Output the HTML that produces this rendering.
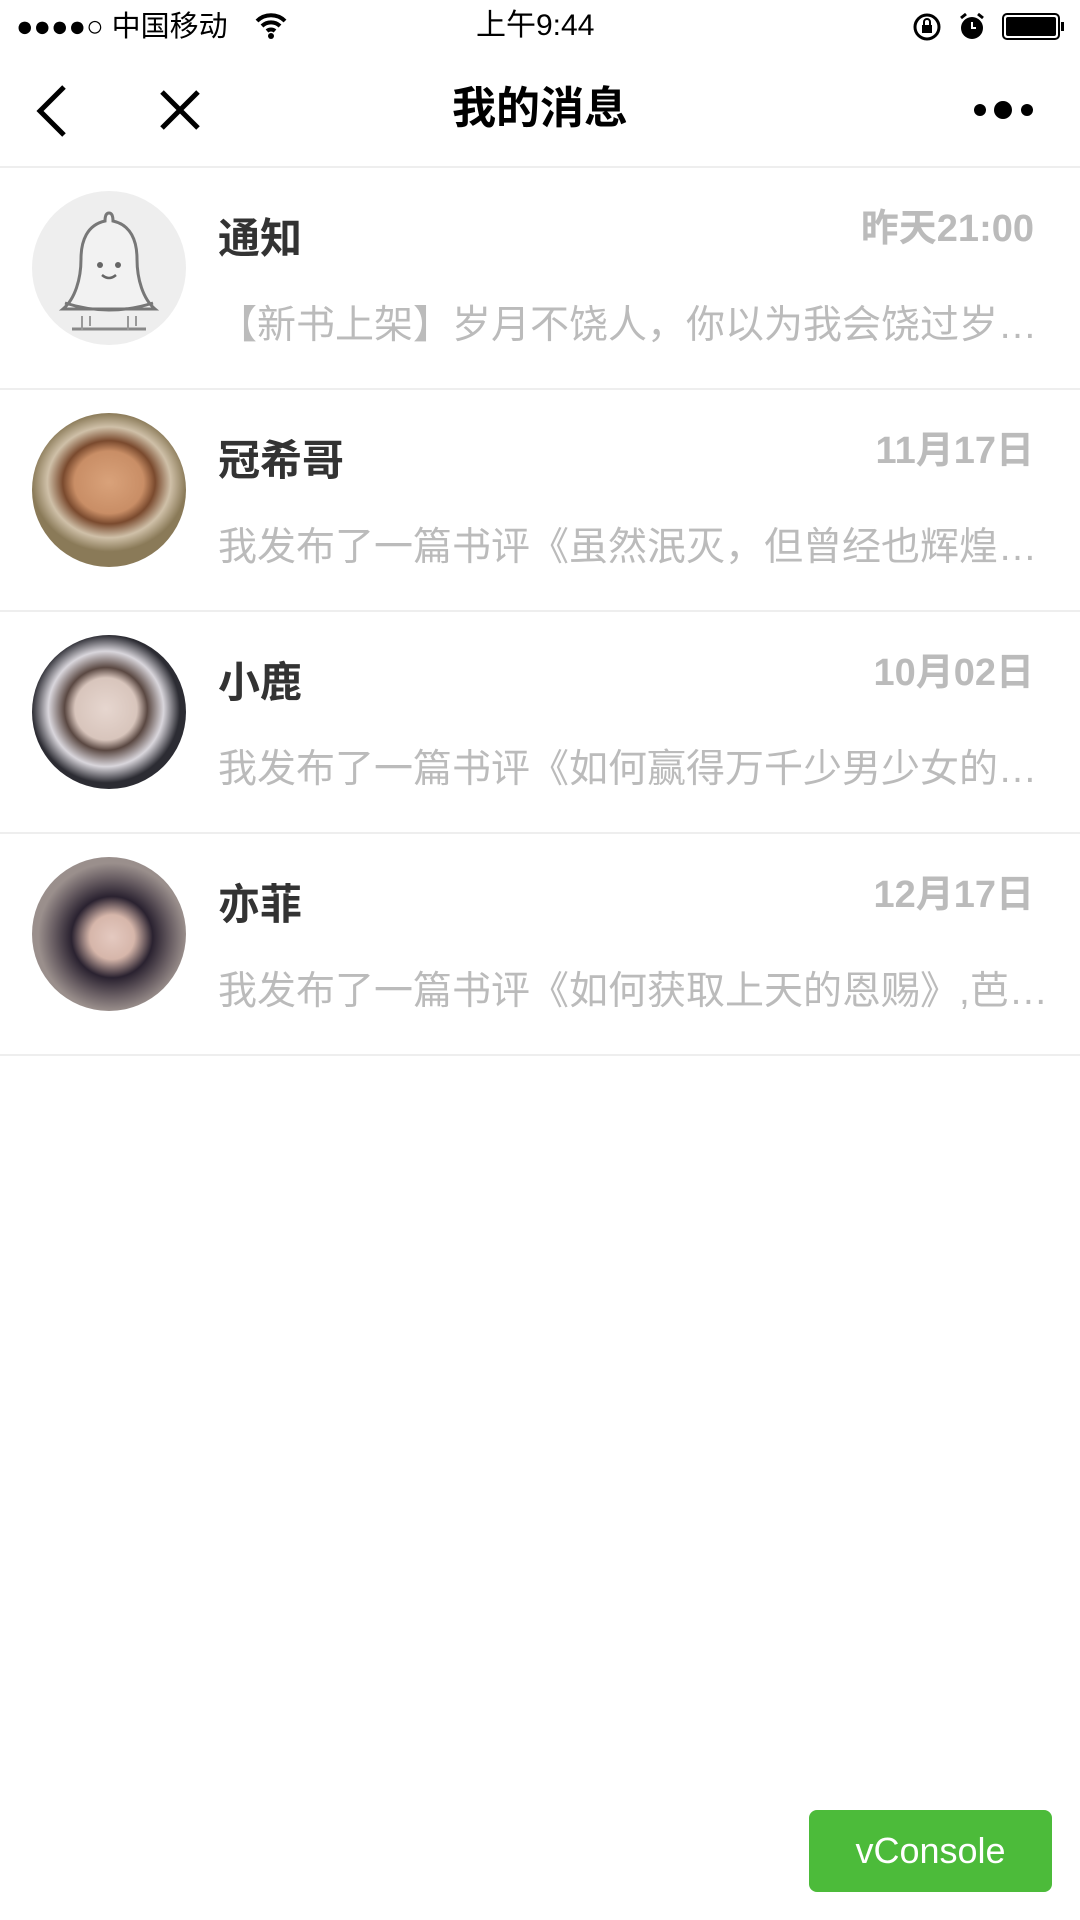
<!DOCTYPE html>
<html><head><meta charset="utf-8"><style>
*{margin:0;padding:0;box-sizing:border-box}
body{width:1080px;height:1920px;background:#fff;position:relative;overflow:hidden;font-family:"Liberation Sans","Noto Sans CJK SC",sans-serif;color:#000}
.abs{position:absolute}
.row{position:absolute;left:0;width:1080px;height:222px;border-bottom:2px solid #eee}
.av{position:absolute;left:32px;top:23px;width:154px;height:154px;border-radius:50%;overflow:hidden}
.name{position:absolute;left:218px;top:46px;font-size:42px;font-weight:bold;color:#333;line-height:50px}
.time{position:absolute;right:46px;top:38px;font-size:38px;font-weight:bold;color:#bbb;line-height:46px}
.pre{position:absolute;left:218px;top:134px;width:830px;font-size:39px;color:#bbb;line-height:48px;white-space:nowrap;overflow:hidden}
</style></head><body>
<div class="abs" style="left:16px;top:10px;font-size:29px;line-height:34px;">●●●●○ 中国移动</div>
<svg class="abs" style="left:255px;top:12px" width="32" height="28" viewBox="0 0 32 28"><path d="M2 9a20 20 0 0 1 28 0M7 14a13 13 0 0 1 18 0M12 19a6 6 0 0 1 8 0" stroke="#000" stroke-width="4" fill="none"/><circle cx="16" cy="24" r="3"/></svg>
<div class="abs" style="left:476px;top:8px;font-size:30px;line-height:36px">上午9:44</div>
<svg class="abs" style="left:912px;top:12px" width="32" height="30" viewBox="0 0 32 30"><circle cx="15" cy="15" r="12" stroke="#000" stroke-width="3" fill="none"/><rect x="10" y="13" width="10" height="8" fill="#000"/><path d="M12 13v-3a3 3 0 0 1 6 0v3" stroke="#000" stroke-width="2" fill="none"/></svg>
<svg class="abs" style="left:958px;top:12px" width="28" height="30" viewBox="0 0 28 30"><circle cx="14" cy="16" r="11" fill="#000"/><path d="M3 6l5-4M25 6l-5-4" stroke="#000" stroke-width="3"/><path d="M14 10v6h4" stroke="#fff" stroke-width="2" fill="none"/></svg>
<div class="abs" style="left:1002px;top:13px;width:58px;height:27px;border:2px solid #000;border-radius:5px;padding:2px"><div style="width:100%;height:100%;background:#000;border-radius:2px"></div></div>
<div class="abs" style="left:1061px;top:22px;width:3px;height:9px;background:#000"></div>
<svg class="abs" style="left:34px;top:84px" width="36" height="54" viewBox="0 0 36 54"><path d="M30 3L6 27l24 24" stroke="#000" stroke-width="5" fill="none"/></svg>
<svg class="abs" style="left:158px;top:88px" width="44" height="44" viewBox="0 0 44 44"><path d="M4 4l36 36M40 4L4 40" stroke="#000" stroke-width="5"/></svg>
<div class="abs" style="left:0;width:1080px;top:82px;text-align:center;font-size:44px;font-weight:bold;line-height:54px">我的消息</div>
<svg class="abs" style="left:972px;top:98px" width="64" height="24" viewBox="0 0 64 24"><circle cx="8" cy="12" r="6"/><circle cx="31" cy="12" r="9"/><circle cx="55" cy="12" r="6"/></svg>
<div class="abs" style="left:0;top:166px;width:1080px;height:2px;background:#eee"></div>
<div class="row" style="top:168px">
 <div class="av" style="background:#eee"><svg width="154" height="154" viewBox="0 0 154 154"><path d="M77 22c-4 0-4 6-4 8-18 4-24 20-24 38 0 20-6 40-18 50h92c-12-10-18-30-18-50 0-18-6-34-24-38 0-2 0-8-4-8z" fill="#f2f2f2" stroke="#777" stroke-width="3"/><path d="M33 112q44 14 88 0" stroke="#777" stroke-width="3" fill="none"/><circle cx="68" cy="74" r="3" fill="#666"/><circle cx="86" cy="74" r="3" fill="#666"/><path d="M70 84q7 6 14 0" stroke="#666" stroke-width="2.5" fill="none"/><path d="M40 138h74" stroke="#888" stroke-width="3"/><path d="M50 125v14M58 125v10M96 125v14M104 125v10" stroke="#999" stroke-width="2"/></svg></div>
 <div class="name">通知</div><div class="time">昨天21:00</div>
 <div class="pre">【新书上架】岁月不饶人，你以为我会饶过岁…</div>
</div>
<div class="row" style="top:390px">
 <div class="av" style="background:radial-gradient(closest-side at 50% 45%,#d9a27a 0,#c98e66 45%,#7a4a2e 60%,#cfc0a8 80%,#8a7a58 100%)"></div>
 <div class="name">冠希哥</div><div class="time">11月17日</div>
 <div class="pre">我发布了一篇书评《虽然泯灭，但曾经也辉煌…</div>
</div>
<div class="row" style="top:612px">
 <div class="av" style="background:radial-gradient(closest-side at 48% 48%,#e6d6cf 0,#d8c5bc 42%,#5a4842 56%,#d9d6dc 78%,#2c2c33 100%)"></div>
 <div class="name">小鹿</div><div class="time">10月02日</div>
 <div class="pre">我发布了一篇书评《如何赢得万千少男少女的…</div>
</div>
<div class="row" style="top:834px">
 <div class="av" style="background:radial-gradient(closest-side at 52% 52%,#e4c9c0 0,#d6b6aa 30%,#2a2230 55%,#6a5f64 80%,#9a8f8c 100%)"></div>
 <div class="name">亦菲</div><div class="time">12月17日</div>
 <div class="pre">我发布了一篇书评《如何获取上天的恩赐》,芭…</div>
</div>
<div class="abs" style="left:809px;top:1810px;width:243px;height:82px;background:#4cbb3a;border-radius:8px;color:#fff;font-size:36px;line-height:82px;text-align:center">vConsole</div>
</body></html>
